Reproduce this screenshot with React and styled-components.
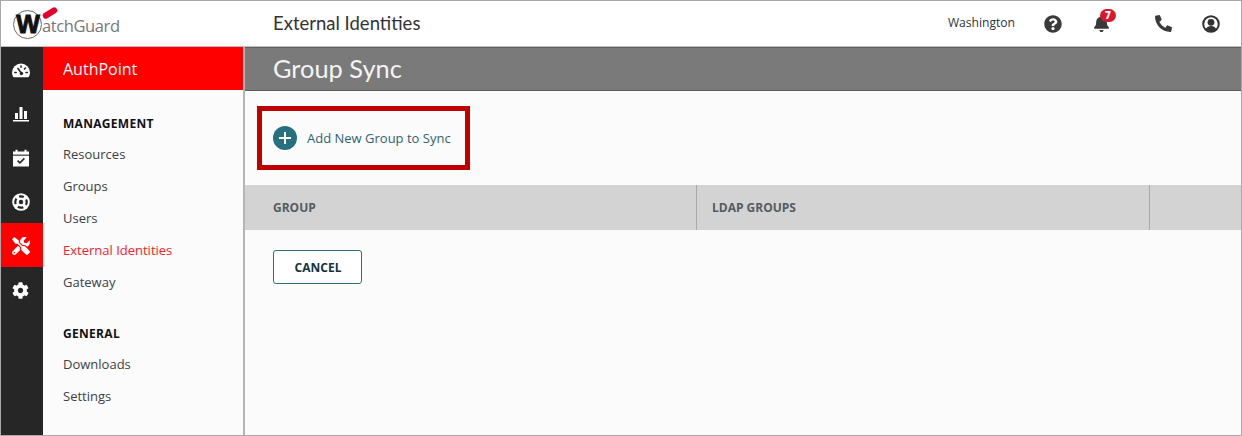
import React from 'react'
import styled, { createGlobalStyle } from 'styled-components'
import { FaPhone, FaCog, FaTools, FaQuestionCircle, FaBell } from 'react-icons/fa'

const Global = createGlobalStyle`
  * { box-sizing: border-box; }
  html, body { margin: 0; padding: 0; background: #fff; }
  body { font-family: "Open Sans", "Liberation Sans", sans-serif; }
`

const Frame = styled.div`
  width: 1242px;
  height: 436px;
  border: 1px solid #a9a9a9;
  display: flex;
  flex-direction: column;
  overflow: hidden;
`

const Header = styled.header`
  height: 46px;
  flex: none;
  display: flex;
  align-items: center;
  background: #fff;
  border-bottom: 1px solid #bdbdbd;
`

const LogoBox = styled.div`
  width: 272px;
  padding: 2px 0 0 12px;
  flex: none;
  display: flex;
  align-items: center;
  position: relative;
`

const LogoRing = styled.div`
  width: 29px;
  height: 29px;
  border: 1px solid #6b6b6b;
  border-radius: 50%;
  display: flex;
  align-items: center;
  justify-content: center;
  font-family: "Liberation Sans", sans-serif;
  font-weight: 700;
  font-size: 25px;
  letter-spacing: -1px;
  color: #111;
  -webkit-text-stroke: 1px #111;
  flex: none;
`

const LogoWord = styled.span`
  font-family: "Open Sans", sans-serif;
  font-size: 16.5px;
  letter-spacing: -0.4px;
  color: #777;
  margin: 1px 0 0 0;
`

const LogoMark = styled.span`
  position: absolute;
  left: 41px;
  top: 2px;
  width: 16px;
  height: 6px;
  background: #e4002b;
  border-radius: 3px;
  transform: rotate(-32deg);
`

const HeaderTitle = styled.div`
  flex: 1;
  font-family: "Lato", sans-serif;
  font-size: 18.5px;
  color: #333;
  margin-top: -1px;
`

const HeaderRight = styled.div`
  display: flex;
  align-items: center;
  color: #333;
`

const Location = styled.span`
  font-size: 12.1px;
  color: #2b3540;
  margin: -2px 29px 0 0;
`

const TopIcon = styled.span`
  width: 18px;
  height: 18px;
  display: flex;
  align-items: center;
  justify-content: center;
  margin-right: ${p => p.$gap}px;
  position: relative;
  color: #3a3a3a;
  font-size: ${p => p.$size || 17}px;
`

const Badge = styled.span`
  position: absolute;
  left: 8px;
  top: -6px;
  width: 16px;
  height: 13px;
  border-radius: 7px;
  background: #d9182d;
  color: #fff;
  font-size: 10px;
  font-weight: 800;
  line-height: 13px;
  text-align: center;
`

const Body = styled.div`
  flex: 1;
  display: flex;
  min-height: 0;
`

const Rail = styled.nav`
  width: 42px;
  flex: none;
  background: #262626;
  display: flex;
  flex-direction: column;
`

const RailItem = styled.div`
  height: 44px;
  padding: 2px 3px 0 0;
  display: flex;
  align-items: center;
  justify-content: center;
  color: #fff;
  font-size: ${p => p.$size || 18}px;
  background: ${p => (p.$active ? '#ff0000' : 'transparent')};
`

const Sidebar = styled.aside`
  width: 202px;
  flex: none;
  background: #fbfbfb;
  border-right: 2px solid #b5b5b5;
  display: flex;
  flex-direction: column;
`

const Product = styled.div`
  height: 43px;
  background: #ff0000;
  color: #fff;
  font-size: 16px;
  font-weight: 500;
  padding-left: 20px;
  display: flex;
  align-items: center;
`

const NavGroup = styled.div`
  padding-left: 20px;
  margin-top: ${p => p.$top}px;
  display: flex;
  flex-direction: column;
`

const NavHead = styled.div`
  font-size: 12px;
  font-weight: 700;
  color: #111;
  letter-spacing: 0.3px;
  line-height: 16px;
  margin-bottom: 6px;
`

const NavLink = styled.div`
  font-size: 13px;
  line-height: 32px;
  color: ${p => (p.$active ? '#f5202e' : '#3b4148')};
`

const Main = styled.main`
  flex: 1;
  background: #fbfbfb;
  display: flex;
  flex-direction: column;
`

const TitleBar = styled.div`
  height: 44px;
  background: #7a7a7a;
  border-top: 1px solid #5f5f5f;
  border-bottom: 1px solid #5f5f5f;
  color: #f4f4f4;
  font-family: "Lato", sans-serif;
  font-size: 25.4px;
  padding: 0 0 2px 28px;
  display: flex;
  align-items: center;
`

const ActionRow = styled.div`
  height: 94px;
  padding: 15px 0 0 12px;
`

const Callout = styled.div`
  width: 213px;
  height: 64px;
  border: 5px solid #c00000;
  display: flex;
  align-items: center;
  padding-left: 11px;
  gap: 10px;
`

const AddCircle = styled.span`
  width: 24px;
  height: 24px;
  border-radius: 50%;
  background: #27707f;
  display: flex;
  align-items: center;
  justify-content: center;
  flex: none;
`

const AddLabel = styled.span`
  font-size: 13px;
  color: #2f6370;
`

const TableHead = styled.div`
  height: 45px;
  background: #d3d3d3;
  display: grid;
  grid-template-columns: 452px 453px 1fr;
`

const HeadCell = styled.div`
  font-size: 12px;
  font-weight: 700;
  color: #555b60;
  display: flex;
  align-items: center;
  padding-left: ${p => p.$pad}px;
  border-right: ${p => (p.$line ? '1px solid #a8a8a8' : 'none')};
`

const Footer = styled.div`
  padding: 20px 0 0 28px;
`

const CancelButton = styled.button`
  width: 89px;
  height: 34px;
  background: #fff;
  border: 1px solid #2f6f7d;
  border-radius: 3px;
  color: #14333c;
  font-family: inherit;
  font-size: 12px;
  font-weight: 700;
  padding: 0 0 0 1px;
`

const Gauge = () => (
  <svg width="20" height="17" viewBox="0 0 20 17">
    <path fill="#fff" d="M10 1.5a9 9 0 0 0-9 9c0 1.6.4 3 1.1 4.2.2.3.5.5.9.5h14c.4 0 .7-.2.9-.5.7-1.2 1.1-2.6 1.1-4.2a9 9 0 0 0-9-9z" />
    <path stroke="#262626" strokeWidth="1.6" strokeLinecap="round" d="M10.5 11.5 7 6.5M3.8 10.5h1.4M15 10.5h1.4M10 4v1.2M14.5 6l-1 1" />
    <circle cx="10.5" cy="11.5" r="1.7" fill="#262626" />
  </svg>
)

const Bars = () => (
  <svg width="18" height="16" viewBox="0 0 18 16">
    <path fill="#fff" d="M3 7h3v6H3zM7.5 1h3v12h-3zM12 5h3v8h-3zM1 14h16v1.600H1z" />
  </svg>
)

const Calendar = () => (
  <svg width="18" height="18" viewBox="0 0 18 18">
    <path fill="#fff" d="M1 2.500h2.500V.8h2v1.700h7V.8h2v1.700H17V17.500H1z" />
    <rect x="1" y="5.600" width="16" height="1.100" fill="#262626" />
    <path fill="none" stroke="#262626" strokeWidth="1.6" d="M5.600 11.600l2.300 2.300 4.500-4.500" />
  </svg>
)

const Ring = () => (
  <svg width="18" height="18" viewBox="0 0 18 18">
    <circle cx="9" cy="9" r="8.800" fill="#fff" />
    <circle cx="9" cy="9" r="5.700" fill="none" stroke="#262626" strokeWidth="2.2" strokeDasharray="5.7 3.25" strokeDashoffset="2.85" transform="rotate(-90 9 9)" />
    <circle cx="9" cy="9" r="2.200" fill="#262626" />
  </svg>
)

const UserRound = () => (
  <svg width="18" height="18" viewBox="0 0 18 18">
    <circle cx="9" cy="9" r="7.800" fill="#fff" stroke="#333" strokeWidth="2" />
    <circle cx="9" cy="7.300" r="3.400" fill="#333" />
    <path fill="#333" d="M3.800 14c1-2.200 2.800-3.100 5.200-3.100s4.200.9 5.200 3.100a7 7 0 0 1-10.400 0z" />
  </svg>
)

const Plus = () => (
  <svg width="14" height="14" viewBox="0 0 14 14">
    <path stroke="#fff" strokeWidth="2" d="M7 1v12M1 7h12" />
  </svg>
)

const menu = ['Resources', 'Groups', 'Users', 'External Identities', 'Gateway']

export default function App() {
  return (
    <Frame>
      <Global />
      <Header>
        <LogoBox>
          <LogoRing>W</LogoRing>
          <LogoWord>atchGuard</LogoWord>
          <LogoMark />
        </LogoBox>
        <HeaderTitle>External Identities</HeaderTitle>
        <HeaderRight>
          <Location>Washington</Location>
          <TopIcon $gap={30} $size={18}><FaQuestionCircle /></TopIcon>
          <TopIcon $gap={44}><FaBell /><Badge>7</Badge></TopIcon>
          <TopIcon $gap={30} $size={17}><FaPhone style={{ transform: 'scaleX(-1)' }} /></TopIcon>
          <TopIcon $gap={21}><UserRound /></TopIcon>
        </HeaderRight>
      </Header>
      <Body>
        <Rail>
          <RailItem><Gauge /></RailItem>
          <RailItem><Bars /></RailItem>
          <RailItem><Calendar /></RailItem>
          <RailItem><Ring /></RailItem>
          <RailItem $active><FaTools /></RailItem>
          <RailItem $size={17}><FaCog /></RailItem>
        </Rail>
        <Sidebar>
          <Product>AuthPoint</Product>
          <NavGroup $top={26}>
            <NavHead>MANAGEMENT</NavHead>
            {menu.map(m => (
              <NavLink key={m} $active={m === 'External Identities'}>{m}</NavLink>
            ))}
          </NavGroup>
          <NavGroup $top={28}>
            <NavHead>GENERAL</NavHead>
            <NavLink>Downloads</NavLink>
            <NavLink>Settings</NavLink>
          </NavGroup>
        </Sidebar>
        <Main>
          <TitleBar>Group Sync</TitleBar>
          <ActionRow>
            <Callout>
              <AddCircle><Plus /></AddCircle>
              <AddLabel>Add New Group to Sync</AddLabel>
            </Callout>
          </ActionRow>
          <TableHead>
            <HeadCell $pad={28} $line>GROUP</HeadCell>
            <HeadCell $pad={15} $line>LDAP GROUPS</HeadCell>
            <HeadCell />
          </TableHead>
          <Footer>
            <CancelButton>CANCEL</CancelButton>
          </Footer>
        </Main>
      </Body>
    </Frame>
  )
}
